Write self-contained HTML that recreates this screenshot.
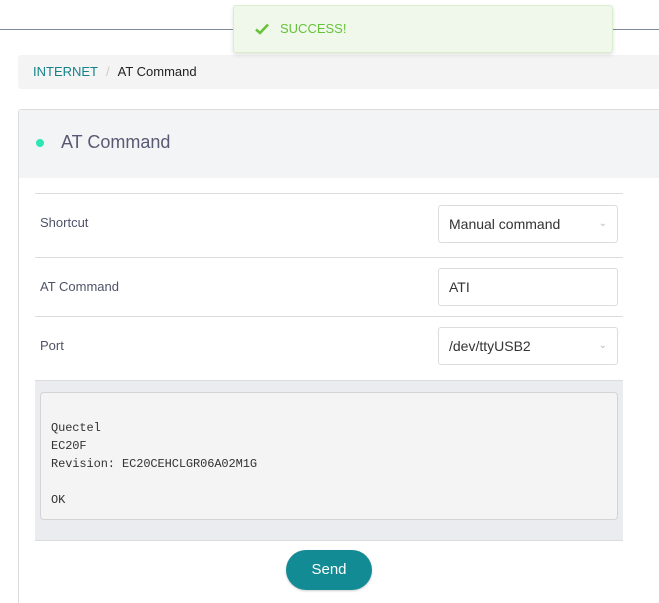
<!DOCTYPE html>
<html><head><style>
*{box-sizing:border-box;margin:0;padding:0}
html,body{width:659px;height:603px;overflow:hidden}
body{background:#fff;font-family:"Liberation Sans",sans-serif;position:relative}
.hr{position:absolute;left:0;top:29px;width:659px;height:1px;background:#7e8a99}
.toast{position:absolute;left:233px;top:5px;width:380px;height:48px;background:#f0f8ec;border:1px solid #d8eecd;border-radius:3px;box-shadow:0 2px 4px rgba(0,0,0,.12)}
.toast span{position:absolute;left:46px;top:15px;color:#67c23a;font-size:13px}
.toast svg{position:absolute;left:21px;top:17px}
.bc{position:absolute;left:18px;top:55px;width:660px;height:34px;background:#f4f4f5;border-radius:3px;font-size:13px;line-height:34px;padding-left:15px;color:#222}
.bc a{color:#16838b}
.bc i{color:#ccc;font-style:normal;margin:0 8px}
.card{position:absolute;left:18px;top:109px;width:660px;height:520px;border:1px solid #dcdcdc;border-radius:3px;background:#fff}
.head{height:68px;background:#f3f4f6;position:relative}
.dot{position:absolute;left:17px;top:29px;width:8px;height:8px;border-radius:50%;background:#2de6b4}
.head h1{position:absolute;left:42px;top:22px;font-size:18px;font-weight:normal;color:#575a72}
.row{position:absolute;left:16px;width:588px;border-top:1px solid #dcdcdc;font-size:13px;color:#4f5368}
.row .l{position:absolute;left:5px}
.inp{position:absolute;left:403px;width:180px;height:38px;border:1px solid #dcdcdc;border-radius:3px;font-size:14px;color:#333;padding-left:10px;line-height:36px}
.inp b{position:absolute;right:10px;top:0;color:#bbb;font-weight:normal;font-size:10px}
.out{position:absolute;left:16px;top:270px;width:588px;height:161px;background:#ebecf0;border-top:1px solid #dcdcdc;border-bottom:1px solid #dcdcdc}
.pre{position:absolute;left:5px;top:11px;width:578px;height:128px;background:#f4f4f4;border:1px solid #d4d4d4;border-radius:4px;font-family:"Liberation Mono","DejaVu Sans Mono",monospace;font-size:12px;letter-spacing:-0.1px;line-height:18px;color:#333;padding:26px 0 0 10px;white-space:pre}
.btn{position:absolute;left:267px;top:440px;width:86px;height:40px;border-radius:20px;background:#138b94;color:#fff;font-size:15px;text-align:center;line-height:40px;box-shadow:0 1px 2px rgba(0,0,0,.2)}
</style></head><body>
<div class="hr"></div>
<div class="bc"><a>INTERNET</a><i>/</i>AT Command</div>
<div class="card">
<div class="head"><div class="dot"></div><h1>AT Command</h1></div>
<div class="row" style="top:83px;height:64px"><span class="l" style="top:21px">Shortcut</span><div class="inp" style="top:11px">Manual command<b>&#8964;</b></div></div>
<div class="row" style="top:147px;height:59px"><span class="l" style="top:21px">AT Command</span><div class="inp" style="top:10px">ATI</div></div>
<div class="row" style="top:206px;height:64px"><span class="l" style="top:21px">Port</span><div class="inp" style="top:10px">/dev/ttyUSB2<b>&#8964;</b></div></div>
<div class="out"><div class="pre">Quectel
EC20F
Revision: EC20CEHCLGR06A02M1G

OK</div></div>
<div class="btn">Send</div>
</div>
<div class="toast"><svg width="14" height="12" viewBox="0 0 14 12"><path d="M1 6.5 L5 10 L13 1.5" stroke="#67c23a" stroke-width="2.6" fill="none"/></svg><span>SUCCESS!</span></div>
</body></html>
